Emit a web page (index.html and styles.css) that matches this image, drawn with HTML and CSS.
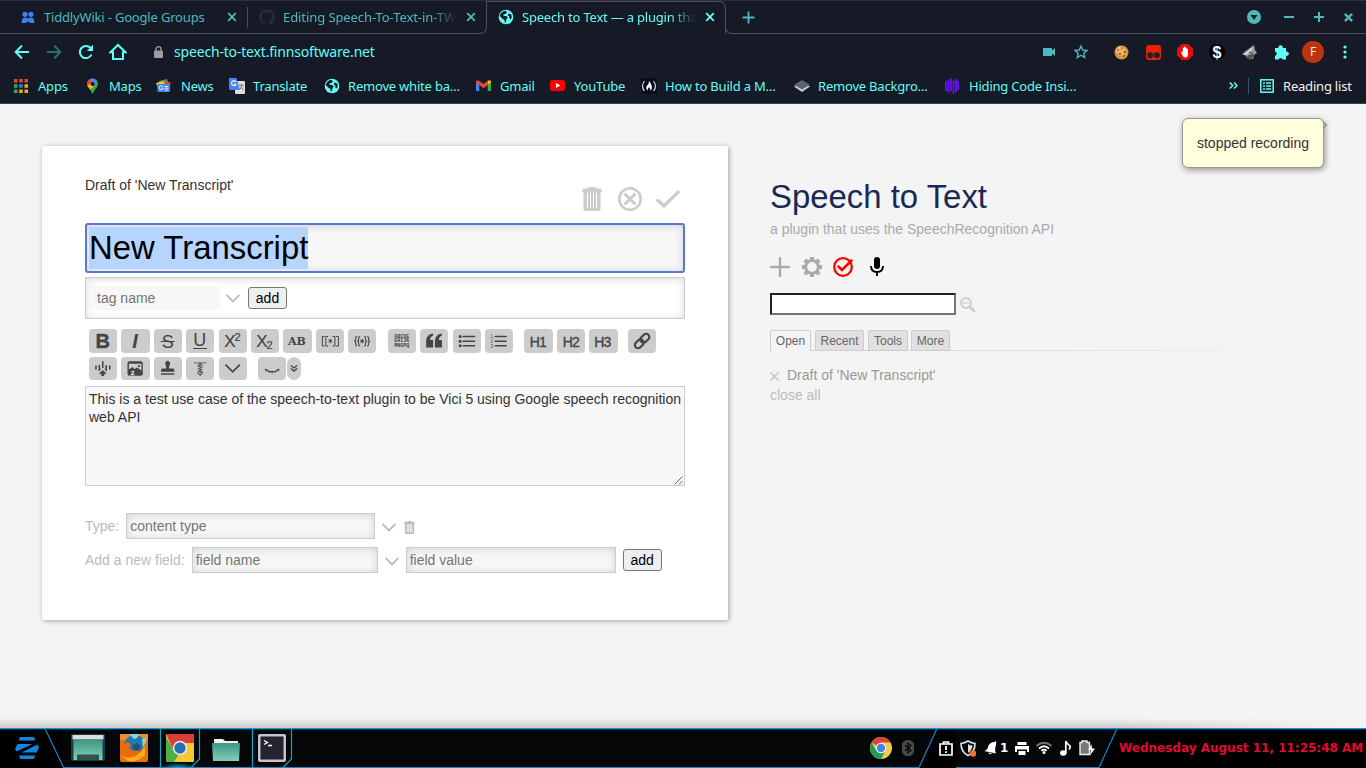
FILE: index.html
```html
<!DOCTYPE html>
<html lang="en">
<head>
<meta charset="utf-8">
<title>Speech to Text — a plugin that uses the SpeechRecognition API</title>
<link rel="stylesheet" href="styles.css">
</head>
<body>
<svg width="0" height="0" class="defs">
  <defs>
    <symbol id="globe" viewBox="0 0 16 16"><circle cx="8" cy="8" r="7.3" fill="#62fdf5"/><path d="M7.5 1.8 9 3.5 7.4 5 5.6 5.3 5.4 6.8 8.7 7.2 9.8 8.6 8.6 9.8 8 12.8 6.8 14 6.5 11 4.5 9.8 1.5 6.7 3.2 4 5 2.6zM10.5 4.4 13.3 5.6 13.8 8.5 12.4 10.6 11.2 9 11.3 7.2 9.8 6.4z" fill="#161a26"/></symbol>
    <symbol id="x" viewBox="0 0 10 10"><path d="M1.2 1.2 8.8 8.8M8.8 1.2 1.2 8.8" stroke="currentColor" stroke-width="1.8"/></symbol>
    <symbol id="down" viewBox="0 0 14 9"><path d="M1 1.3 7 7.4 13 1.3" fill="none" stroke="currentColor" stroke-width="1.8" stroke-linecap="round"/></symbol>
    <symbol id="trash" viewBox="0 0 20 24"><path d="M7 0H13L14 1.5H18.5L20 3V4.8H0V3L1.5 1.5H6zM1.5 4.5H18.500V22.500L17 24H3L1.500 22.500zM5 6V21H6V6zM8 6V21H9V6zM11 6V21H12V6zM14 6V21H15V6z" fill="currentColor" fill-rule="nonzero"/><path d="M5.500 5.500V20.500M8.500 5.500V20.500M11.500 5.500V20.500M14.500 5.500V20.500" stroke="#fff" stroke-width=".9"/></symbol>
  </defs>
</svg>

<header class="browser">
  <div class="tabs">
    <div class="tab tab-groups">
      <svg width="14" height="13" viewBox="0 0 14 13" fill="#3f7df0"><circle cx="4" cy="3.3" r="2.6"/><circle cx="10" cy="3.3" r="2.6"/><path d="M.5 12 1 8.500Q1.500 6.500 4 6.500T7 7.500Q8 6.500 10 6.500T13 8.500L13.500 12H9.500L7 10.500 4.500 12z"/></svg>
      <span class="tab-title">TiddlyWiki - Google Groups</span>
      <svg class="close" width="10" height="10"><use href="#x"/></svg>
    </div>
    <div class="tab tab-edit">
      <svg width="16" height="16" viewBox="0 0 16 16"><path fill="#242c33" fill-rule="evenodd" d="M8 0C3.6 0 0 3.6 0 8c0 3.5 2.3 6.5 5.5 7.6.4.1.5-.2.5-.4v-1.4c-2.2.5-2.7-1-2.7-1-.4-.9-.9-1.2-.9-1.2-.7-.5.1-.5.1-.5.8.1 1.2.8 1.2.8.7 1.2 1.9.9 2.3.7.1-.5.3-.9.5-1.1-1.8-.2-3.6-.9-3.6-4 0-.9.3-1.6.8-2.1-.1-.2-.4-1 .1-2.1 0 0 .7-.2 2.2.8a7.7 7.7 0 0 1 4 0c1.5-1 2.2-.8 2.2-.8.5 1.1.2 1.9.1 2.1.5.5.8 1.2.8 2.1 0 3.1-1.8 3.8-3.6 4 .3.3.6.8.6 1.5v2.2c0 .2.1.5.5.4A8 8 0 0 0 16 8c0-4.4-3.6-8-8-8z"/></svg>
      <span class="tab-title fade">Editing Speech-To-Text-in-TW</span>
      <svg class="close" width="10" height="10"><use href="#x"/></svg>
    </div>
    <div class="tab tab-active">
      <svg width="16" height="16"><use href="#globe"/></svg>
      <span class="tab-title fade">Speech to Text — a plugin tha</span>
      <svg class="close" width="10" height="10"><use href="#x"/></svg>
    </div>
    <svg class="newtab" width="13" height="13" viewBox="0 0 13 13"><path d="M6.5 .5V12.5M.5 6.5H12.5" stroke="#4fb8bd" stroke-width="1.8"/></svg>
    <div class="window-buttons">
      <svg width="14" height="14" viewBox="0 0 14 14"><circle cx="7" cy="7" r="7" fill="#4fb8bd"/><path d="M3.5 5H10.5L7 10z" fill="#161a26"/></svg>
      <svg width="10" height="10" viewBox="0 0 10 10"><path d="M0 5H10" stroke="#4fb8bd" stroke-width="2"/></svg>
      <svg width="10" height="10" viewBox="0 0 10 10"><path d="M0 5H10M5 0V10" stroke="#4fb8bd" stroke-width="2"/></svg>
      <svg width="9" height="9" viewBox="0 0 10 10"><path d="M1 1 9 9M9 1 1 9" stroke="#4fb8bd" stroke-width="2.6"/></svg>
    </div>
  </div>

  <div class="address">
    <svg class="nav-icon" width="16" height="16" viewBox="0 0 16 16"><path d="M15 8H2M8 1.5 1.7 8 8 14.5" fill="none" stroke="#62fdf5" stroke-width="2"/></svg>
    <svg class="nav-icon" width="16" height="16" viewBox="0 0 16 16"><path d="M1 8H14M8 1.5 14.3 8 8 14.5" fill="none" stroke="#2f6c73" stroke-width="2"/></svg>
    <svg class="nav-icon" width="16" height="16" viewBox="0 0 16 16"><path d="M13.5 10.6A6.1 6.1 0 1 1 12.6 4" fill="none" stroke="#62fdf5" stroke-width="2"/><path d="M15 .8V7H8.8z" fill="#62fdf5"/></svg>
    <svg class="nav-icon" width="18" height="18" viewBox="0 0 18 18"><path d="M1.5 9.2 9 2 16.500 9.200H14V16H4V9.200z" fill="none" stroke="#62fdf5" stroke-width="2"/></svg>
    <svg class="lock" width="9" height="12" viewBox="0 0 9 12"><rect y="4.500" width="9" height="7.500" rx="1" fill="#9b9da2"/><path d="M2 5V3.200A2.500 2.500 0 0 1 7 3.200V5" fill="none" stroke="#9b9da2" stroke-width="1.300"/></svg>
    <span class="url">speech-to-text.finnsoftware.net</span>
    <div class="extensions">
      <svg width="12" height="8" viewBox="0 0 12 8"><path d="M0 0H9V2.500L12 0V8L9 5.500V8H0z" fill="#4fb8bd"/></svg>
      <svg width="14" height="14" viewBox="0 0 14 14"><path d="M7 1 8.700 5 13 5.400 9.800 8.200 10.700 12.500 7 10.200 3.300 12.500 4.200 8.200 1 5.400 5.300 5z" fill="none" stroke="#4fb8bd" stroke-width="1.400"/></svg>
      <svg class="cookie" width="15" height="15" viewBox="0 0 15 15"><circle cx="7.500" cy="7.500" r="7" fill="#d8953c"/><circle cx="6.500" cy="6" r="5" fill="#edb565"/><g fill="#70400f"><circle cx="4" cy="5" r=".8"/><circle cx="8" cy="3" r=".8"/><circle cx="10.500" cy="7" r=".9"/><circle cx="6" cy="9" r=".9"/><circle cx="10" cy="11" r=".8"/><circle cx="3" cy="9.500" r=".6"/></g></svg>
      <svg width="15" height="15" viewBox="0 0 15 15"><rect width="15" height="15" rx="3" fill="#e62200"/><circle cx="4.200" cy="10.300" r="3" fill="#222"/><circle cx="10.800" cy="10.300" r="3" fill="#222"/></svg>
      <svg width="16" height="16" viewBox="0 0 16 16"><path d="M4.700 0H11.300L16 4.700V11.300L11.300 16H4.700L0 11.300V4.700z" fill="#e40d12"/><path d="M4 8 5 7.500 5.800 9V4Q6.400 3 7 4V2.800Q7.700 2 8.300 2.800V4Q9 3 9.600 4V5Q10.300 4.300 11 5V10Q11 13.500 8.300 13.500Q6 13 5 10.500z" fill="#fff"/></svg>
      <svg width="16" height="16" viewBox="0 0 16 16"><circle cx="8" cy="8" r="8" fill="#000"/><text x="8" y="13.700" text-anchor="middle" class="dollar">$</text></svg>
      <svg width="15" height="15" viewBox="0 0 15 15"><path d="M0 9 5 5 12 0 13 5 15 8 12 10 11 14 5 13 3 10z" fill="#999"/><path d="M5 11 11 8 12 11 8 15 5 13z" fill="#555"/><path d="M1 10 6 6 11 2 9 7 4 10z" fill="#ddd"/><path d="M6 8 10 6 9 8z" fill="#333"/></svg>
      <svg width="15" height="15" viewBox="0 0 15 15"><path d="M1 3H4.500A2.200 2.200 0 1 1 8.700 3H12V6.600A2.200 2.200 0 1 1 12 10.800V14.500H8.700A2.200 2.200 0 0 0 4.500 14.500H1V10.800A2.200 2.200 0 0 0 1 6.500z" fill="#62fdf5"/></svg>
      <span class="avatar">F</span>
      <svg width="4" height="14" viewBox="0 0 4 14" fill="#62fdf5"><circle cx="2" cy="2" r="1.600"/><circle cx="2" cy="7" r="1.600"/><circle cx="2" cy="12" r="1.600"/></svg>
    </div>
  </div>

  <div class="bookmarks">
    <div class="bm"><svg width="14" height="14" viewBox="0 0 14 14"><path d="M0 0H3.500V3.500H0zM5.200 0H8.700V3.500H5.200zM10.500 0H14V3.500H10.500z" fill="#ea4335"/><path d="M0 5.200H3.500V8.700H0zM0 10.500H3.500V14H0z" fill="#34a853"/><path d="M5.200 5.200H8.700V8.700H5.200z" fill="#1a82f7"/><path d="M10.500 5.200H14V8.700H10.500zM5.200 10.500H8.700V14H5.200zM10.500 10.500H14V14H10.500z" fill="#fbab09"/></svg><span>Apps</span></div>
    <div class="bm"><svg width="13" height="16" viewBox="0 0 13 16"><path d="M1 6A5.500 5.500 0 0 1 12 6C12 9 9 10.500 7 15.500H6C5 11 1 9.500 1 6z" fill="#34a853"/><path d="M1 7A5.500 5.500 0 0 1 6 .5L8.500 3 3 9.500Q1 8 1 7z" fill="#ea4335"/><path d="M4 1.200A5.500 5.500 0 0 1 11 3L7 7z" fill="#4285f4"/><path d="M1.500 8 5 5 8 8 4.500 11.500z" fill="#fbbc04"/><circle cx="6.500" cy="6" r="2" fill="#161a26"/></svg><span>Maps</span></div>
    <div class="bm"><svg width="15" height="14" viewBox="0 0 15 14"><path d="M3 2 11 0 13 6H3z" fill="#2da44e"/><path d="M9 2 15 3.500 13 9H7z" fill="#e23b31"/><path d="M0 4 8 2 9 9H2z" fill="#fbc02d"/><rect x="1.500" y="5" width="12.500" height="8" rx="1" fill="#4888ed"/><path d="M8.500 7.500H12M8.500 9.200H12.500M8.500 11H12" stroke="#fff" stroke-width=".8"/><path d="M6.800 7.700A2 2 0 1 0 7 9.200H5.500" fill="none" stroke="#fff" stroke-width=".9"/></svg><span>News</span></div>
    <div class="bm"><svg width="16" height="16" viewBox="0 0 16 16"><rect x="6" y="3" width="10" height="13" rx="1" fill="#ddd"/><path d="M0 0H7.500L11 12H1Q0 12 0 11z" fill="#4484ef"/><path d="M7 4A2.400 2.400 0 1 0 7.100 6.300H5" fill="none" stroke="#fff" stroke-width="1.100"/><path d="M10 7H14.500M12.200 6V7M13.500 7.500Q12.500 10 10.500 11.500M11.500 8.500 14.500 12" stroke="#777" fill="none"/></svg><span>Translate</span></div>
    <div class="bm"><svg width="16" height="16"><use href="#globe"/></svg><span>Remove white ba…</span></div>
    <div class="bm"><svg width="15" height="12" viewBox="0 0 15 12"><path d="M0 1.500V11H3.300V4z" fill="#4285f4"/><path d="M15 1.500V11H11.700V4z" fill="#34a853"/><path d="M0 2.500V1Q1.500-.5 3 .7L7.500 4 11.700 .8V5L7.500 8.300z" fill="#ea4335"/><path d="M11.700 5V.8Q13.500-.5 15 1V2.600z" fill="#fbbc04"/></svg><span>Gmail</span></div>
    <div class="bm"><svg width="15" height="11" viewBox="0 0 14 11" preserveAspectRatio="none"><rect width="14" height="11" rx="2.500" fill="#f00"/><path d="M5.500 3 9.700 5.500 5.500 8z" fill="#fff"/></svg><span>YouTube</span></div>
    <div class="bm"><svg width="16" height="16" viewBox="0 0 16 16"><rect width="16" height="16" fill="#0a0a23"/><path d="M3.500 3Q-.5 8 3.500 13M12.500 3Q16.500 8 12.500 13" fill="none" stroke="#ddd" stroke-width="1.200"/><path d="M8 3Q11 6.500 11 9.500 10.500 12 9.500 12.500 9.500 10.500 8 9 6.500 10.500 6.800 12.500 5 11 5.200 9 6 7 7.500 6z" fill="#fff"/></svg><span>How to Build a M…</span></div>
    <div class="bm"><svg width="16" height="12" viewBox="0 0 16 12"><path d="M8 2.200 16 6.500 8 12 0 6.500z" fill="#c8cccf"/><path d="M8 0 16 4.700 8 9.500 0 4.700z" fill="#59666f"/></svg><span>Remove Backgro…</span></div>
    <div class="bm"><svg width="14" height="16" viewBox="0 0 14 16"><path d="M1 3V13M3.500 1.500V14.500M6 .5V13M8.500 2.500V16M11 1V14M13 3V12.500" stroke="#6610e8" stroke-width="1.900"/></svg><span>Hiding Code Insi…</span></div>
    <div class="reading">
      <svg width="9" height="7" viewBox="0 0 9 7"><path d="M.7 .5 3.700 3.500 .7 6.500M5 .5 8 3.500 5 6.500" fill="none" stroke="#62fdf5" stroke-width="1.500"/></svg>
      <i></i>
      <svg width="14" height="14" viewBox="0 0 14 14"><rect x=".8" y=".8" width="12.400" height="12.400" fill="none" stroke="#62fdf5" stroke-width="1.500"/><path d="M3 4H5M3 7H5M3 10H5M6 4H11M6 7H11M6 10H11" stroke="#62fdf5" stroke-width="1.500"/></svg>
      <span>Reading list</span>
    </div>
  </div>
</header>

<main class="page">
  <section class="tiddler">
    <div class="titlebar">
      <span>Draft of 'New Transcript'</span>
      <div class="controls">
        <svg width="20" height="24"><use href="#trash"/></svg>
        <svg width="24" height="24" viewBox="0 0 24 24"><circle cx="12" cy="12" r="10.700" fill="none" stroke="#ccc" stroke-width="2.600"/><path d="M7.500 7.500 16.500 16.500M16.500 7.500 7.500 16.500" stroke="#ccc" stroke-width="3" stroke-linecap="round"/></svg>
        <svg width="24" height="18" viewBox="0 0 24 18"><path d="M1.700 10.500 8 16 22.300 2" fill="none" stroke="#ccc" stroke-width="3.200" stroke-linecap="round"/></svg>
      </div>
    </div>
    <div class="title-input"><span>New Transcript</span></div>
    <div class="tags">
      <span class="tag-input">tag name</span>
      <svg width="14" height="9"><use href="#down"/></svg>
      <button>add</button>
    </div>
    <div class="toolbar">
      <div class="row row-one">
        <div class="group">
          <b><svg viewBox="0 0 28 24"><text x="13.500" y="19" class="t-bold">B</text></svg></b>
          <b><svg viewBox="0 0 28 24"><text x="14" y="19" class="t-italic">I</text></svg></b>
          <b><svg viewBox="0 0 28 24"><text x="13.500" y="18.800" class="t-plain">S</text><path d="M6.500 12.500H20.500" stroke="#444" stroke-width="1.200"/></svg></b>
          <b><svg viewBox="0 0 28 24"><text x="13.500" y="16.800" class="t-plain">U</text><path d="M7 19.500H21" stroke="#444" stroke-width="1.100"/></svg></b>
          <b><svg viewBox="0 0 28 24"><text x="10.700" y="18" class="t-x">X</text><text x="18.500" y="11.500" class="t-sup">2</text></svg></b>
          <b><svg viewBox="0 0 28 24"><text x="10.700" y="17.500" class="t-x">X</text><text x="18.500" y="20" class="t-sup">2</text></svg></b>
          <b><svg viewBox="0 0 28 24"><text x="13.800" y="16" class="t-slab">AB</text></svg></b>
          <b><svg viewBox="0 0 28 24"><path d="M8.500 7.500H6.200V17H8.500M12 7.500H9.700V17H12M16.500 7.500H18.800V17H16.500M20 7.500H22.300V17H20" fill="none" stroke="#444"/><path d="M14.200 9.800V14.200M12.300 10.800 16.100 13.200M16.100 10.800 12.300 13.200" stroke="#444" stroke-width=".9"/></svg></b>
          <b><svg viewBox="0 0 28 24"><path d="M9 7.500Q7.300 7.500 7.500 10T6 12.200Q7.600 12.200 7.500 14.500T9 17M12 7.500Q10.300 7.500 10.500 10T9 12.200Q10.600 12.200 10.500 14.500T12 17M16 7.500Q17.700 7.500 17.500 10T19 12.200Q17.400 12.200 17.500 14.500T16 17M19 7.500Q20.700 7.500 20.500 10T22 12.200Q20.400 12.200 20.500 14.500T19 17" fill="none" stroke="#444" stroke-width="1.100"/><path d="M14 10V14.400M12.100 11 15.900 13.400M15.900 11 12.100 13.400" stroke="#444"/></svg></b>
        </div>
        <div class="group">
          <b><svg viewBox="0 0 28 24"><text x="13.500" y="9" class="t-tiny">ABCDE</text><text x="13.500" y="13.400" class="t-tiny">GHIJK</text><text x="13.500" y="17.800" class="t-tiny">MNOPQ</text></svg></b>
          <b><svg viewBox="0 0 28 24"><path d="M13 4.500V6.500Q10 7.500 9.900 11H13V18.500H6V12Q6 5.500 13 4.500zM21.800 4.500V6.500Q18.800 7.500 18.700 11H21.800V18.500H14.800V12Q14.800 5.500 21.800 4.500z" fill="#444"/></svg></b>
          <b><svg viewBox="0 0 28 24"><path d="M10 7.500H21.500M10 12.200H21.500M10 16.700H21.500" stroke="#444" stroke-width="1.500" stroke-linecap="round"/><g fill="#444"><circle cx="7" cy="7.500" r="1.500"/><circle cx="7" cy="12.200" r="1.500"/><circle cx="7" cy="16.700" r="1.500"/></g></svg></b>
          <b><svg viewBox="0 0 28 24"><path d="M10 7.500H21M10 12.200H21M10 16.700H21" stroke="#444" stroke-width="1.500" stroke-linecap="round"/><text x="6.500" y="9" class="t-num">1</text><text x="6.500" y="13.800" class="t-num">2</text><text x="6.500" y="18.600" class="t-num">3</text></svg></b>
        </div>
        <div class="group">
          <b><svg viewBox="0 0 28 24"><text x="13.700" y="17.500" class="t-head">H1</text></svg></b>
          <b><svg viewBox="0 0 28 24"><text x="13.700" y="17.500" class="t-head">H2</text></svg></b>
          <b><svg viewBox="0 0 28 24"><text x="13.300" y="17.500" class="t-head">H3</text></svg></b>
        </div>
        <div class="group last">
          <b><svg viewBox="0 0 28 24"><g fill="none" stroke="#444" stroke-width="2.100" transform="rotate(-45 14 12)"><rect x="5" y="8.800" width="10" height="6.400" rx="3.200"/><rect x="12.800" y="8.800" width="10" height="6.400" rx="3.200"/></g></svg></b>
        </div>
      </div>
      <div class="row row-two">
        <div class="group">
          <b><svg viewBox="0 0 28 24"><path d="M6.500 9.500V12.500M10 9V14M13.600 5V11M17.200 9V14M20.800 9.500V12.500" stroke="#444" stroke-width="1.600" stroke-linecap="round"/><path d="M10 14 11.500 12M17.200 14 15.700 12M13.600 14 17 17.200H14.800V19.500H12.400V17.200H10.200z" stroke="#444" stroke-width=".7" fill="#444"/></svg></b>
          <b><svg viewBox="0 0 28 24"><path d="M8 4.500H20Q22 4.500 22 6.500V17.500Q22 19.500 20 19.500H8Q6 19.500 6 17.500V6.500Q6 4.500 8 4.500zM7.500 7V13L11 10.500 13.500 12.500 16 11 20.500 14V7zM17 8.500H19V10.500H17z" fill="#444" fill-rule="evenodd"/><path d="M10 15.500Q12.500 14 12.500 16L10 18.500H13.500" fill="none" stroke="#ddd" stroke-width="1.200"/></svg></b>
          <b><svg viewBox="0 0 28 24"><path d="M13.500 4A2.800 2.800 0 0 1 15.500 8.500Q14.500 11 15 12H19Q20.500 12 20.500 14V15.500H6.500V14Q6.500 12 8 12H12Q12.500 11 11.500 8.500A2.800 2.800 0 0 1 13.500 4zM6.500 17H20.500V18.500H6.500z" fill="#444"/></svg></b>
          <b><svg viewBox="0 0 28 24"><path d="M7.500 6H20.500" stroke="#888" stroke-width="1.500"/><path d="M14 8V17M11.500 9.500 16.500 10.500M11.500 12 16.500 13M11.500 14.500 16.500 15.500M11 16 14 19 17 16M11.500 9 14 6.500 16.500 9" fill="none" stroke="#555" stroke-width="1.200"/></svg></b>
          <b><svg viewBox="0 0 28 24"><path d="M6.500 8.500 13.500 15.500 20.500 8.500" fill="none" stroke="#444" stroke-width="1.800" stroke-linecap="round"/></svg></b>
        </div>
        <div class="preview">
          <b><svg viewBox="0 0 28 24"><path d="M6.500 12.500Q14 18.500 21.500 12.500" fill="none" stroke="#444" stroke-width="1.500"/><path d="M8 13.500 7.300 15M11 15 10.700 16.500M14 15.500V17M17 15 17.300 16.500M20 13.500 20.700 15" fill="none" stroke="#444" stroke-width=".9"/></svg></b>
          <b class="pill"><svg viewBox="0 0 14 24"><path d="M3.800 8.800 7 11.500 10.200 8.800M3.800 12 7 14.700 10.200 12" fill="none" stroke="#444" stroke-width="1.300"/></svg></b>
        </div>
      </div>
    </div>
    <div class="text-area">This is a test use case of the speech-to-text plugin to be Vici 5 using Google speech recognition web API
      <svg class="grip" width="9" height="9" viewBox="0 0 9 9"><path d="M.5 8.500 8.500 .5M5 8.500 8.500 5" stroke="#555" stroke-width=".9"/></svg>
    </div>
    <div class="field-row type-row">
      <label>Type:</label><span class="field type">content type</span>
      <svg width="14" height="9"><use href="#down"/></svg>
      <svg class="small-trash" width="11" height="13"><use href="#trash"/></svg>
    </div>
    <div class="field-row">
      <label>Add a new field:</label><span class="field name">field name</span>
      <svg width="14" height="9"><use href="#down"/></svg>
      <span class="field value">field value</span><button>add</button>
    </div>
  </section>

  <aside class="sidebar">
    <h1>Speech to Text</h1>
    <p class="subtitle">a plugin that uses the SpeechRecognition API</p>
    <div class="page-controls">
      <svg width="20" height="20" viewBox="0 0 20 20"><path d="M10 1V19M1 10H19" stroke="#aaa" stroke-width="2.400" stroke-linecap="round"/></svg>
      <svg width="20" height="20" viewBox="0 0 20 20"><circle cx="10" cy="10" r="6.400" fill="none" stroke="#aaa" stroke-width="3"/><path d="M10 0V3M10 17V20M0 10H3M17 10H20M2.900 2.900 5 5M15 15 17.100 17.100M17.100 2.900 15 5M5 15 2.900 17.100" stroke="#aaa" stroke-width="4"/></svg>
      <svg width="20" height="20" viewBox="0 0 20 20"><circle cx="10" cy="10" r="8.800" fill="none" stroke="red" stroke-width="2.300"/><path d="M5.500 9.500 9 13 18.500 3.500" fill="none" stroke="red" stroke-width="2.500" stroke-linecap="round"/></svg>
      <svg width="14" height="20" viewBox="0 0 14 20"><rect x="4" y="0" width="6" height="12" rx="3"/><path d="M1 9Q1 15 7 15T13 9M7 15V19" fill="none" stroke="#000" stroke-width="1.900"/></svg>
    </div>
    <div class="search"><input type="text"><svg width="16" height="16" viewBox="0 0 16 16"><circle cx="6" cy="6" r="4.900" fill="none" stroke="#ccc" stroke-width="2"/><path d="M9.700 9.700 14 14" stroke="#ccc" stroke-width="2.600" stroke-linecap="round"/><path d="M3 6H9" stroke="#ccc" stroke-width="1.600" stroke-dasharray="1.500 .7"/></svg></div>
    <div class="side-tabs"><span class="on">Open</span><span>Recent</span><span>Tools</span><span>More</span></div>
    <div class="open-item"><svg width="9" height="9" viewBox="0 0 9 9"><path d="M.7 .7 8.300 8.300M8.300 .7 .7 8.300" stroke="#bbb" stroke-width="1.200" stroke-linecap="round"/></svg><span>Draft of 'New Transcript'</span></div>
    <div class="close-all">close all</div>
  </aside>
  <svg class="chevron" width="6" height="8" viewBox="0 0 6 8"><path d="M1 .7 4.500 4 1 7.300" fill="none" stroke="#aaa" stroke-width="1.500"/></svg>
  <div class="notification">stopped recording</div>
</main>

<footer class="taskbar">
  <svg class="bar-lines" width="1366" height="40" viewBox="0 0 1366 40"><path d="M63 1H1366V40H63z" fill="#060708"/><path d="M0 1H45L63 40H0zM937 1H956V40H919zM1117 1H1366V40H1099z" fill="#000"/><path d="M0 .5H1366" stroke="#0b9ae6" stroke-width="1.300"/><g fill="none" stroke="#1287c8" stroke-width="1.200"><path d="M45 .5 63.500 39.500H919L937 .5M956 39.500H1099L1117 .5"/><path d="M160.500 39V.5H199.500V31L191 39.500M252.500 39V.5H291.500V31L283 39.500" stroke="#12a5cc"/></g></svg>
  <div class="launchers">
    <svg width="24" height="22" viewBox="0 0 24 22" fill="#0f86e0"><path d="M5 0H19L20.300 3.500H3.700zM3.700 18.500H20.300L18.500 22H5.500zM2.500 7H17.500L1.500 14.500 0 12zM22.500 7.500 24 10.500 21.500 15.500H6.500z"/></svg>
    <svg width="34" height="30" viewBox="0 0 34 30"><defs><linearGradient id="teal" x2="0" y2="1"><stop stop-color="#3f9683"/><stop offset="1" stop-color="#7fd0bb"/></linearGradient></defs><rect x="0" y="1" width="34" height="27" rx="1" fill="#153f4c"/><rect x="1.500" y="2" width="31" height="4.500" fill="#ddd"/><rect x="2.500" y="6.500" width="29" height="20.500" fill="url(#teal)"/><rect x="6" y="21.500" width="22" height="5.500" fill="#31544d"/></svg>
    <svg width="28" height="28" viewBox="0 0 28 28"><rect width="28" height="28" rx="2" fill="#e1760d"/><path d="M0 0H28V6H0z" fill="#e8912c"/><circle cx="15" cy="12" r="11" fill="#2379ac"/><path d="M9 0H20L17 4 14 5zM22 5 26 4V13L23 15z" fill="#8bd2e4"/><path d="M0 6 4 10 8 8 11 11 9 14 13 17 18 15 20 18 26 8 26 21 18 28H6L0 22z" fill="#e96c0c"/><path d="M0 21Q6 25 13 23T25 12L25 21Q17 29 8 27z" fill="#ffad18"/><path d="M12 12 17 9 21 12 18 17 14 16z" fill="#244e88"/></svg>
    <svg width="28" height="28" viewBox="0 0 28 28"><rect width="28" height="28" rx="1" fill="#f5c735"/><path d="M0 0H28V9H14L8 17z" fill="#d93d35"/><path d="M0 3 9 18 13 20 8 28H0z" fill="#4fae49"/><circle cx="14" cy="14" r="7.200" fill="#eee"/><circle cx="14" cy="14" r="5.700" fill="#286fb5"/></svg>
    <svg width="30" height="24" viewBox="0 0 30 24"><path d="M3 5V1H12L14 3H27V6H3z" fill="#f2f2f2"/><path d="M1 5H29L28 23H2z" fill="url(#teal)"/></svg>
    <svg width="28" height="28" viewBox="0 0 28 28"><rect width="28" height="28" rx="2" fill="#c3c3c8"/><rect x="2.500" y="2.500" width="23" height="23" fill="#252330"/><path d="M6 6.500 9.500 8.500 6 10.500M10 11.500H14" fill="none" stroke="#fff" stroke-width="1.300"/></svg>
  </div>
  <div class="chrome-glow"></div>
  <div class="tray">
    <svg width="22" height="22" viewBox="0 0 22 22"><circle cx="11" cy="11" r="11" fill="#f5cb45"/><path d="M11 11 1.500 5.500A11 11 0 0 1 20.500 5.500H11z" fill="#da4436"/><path d="M1.500 5.500A11 11 0 0 0 11 22L15.500 13.500 11 11 6.300 13.500z" fill="#1b9e5a"/><circle cx="11" cy="11" r="5.300" fill="#fff"/><circle cx="11" cy="11" r="4.200" fill="#4382ed"/></svg>
    <svg width="12" height="16" viewBox="0 0 12 16"><rect width="12" height="16" rx="5.500" fill="#4a4a4a"/><path d="M3 5 9 10.500 6 13V3L9 5.500 3 11" fill="none" stroke="#050505" stroke-width="1.200"/></svg>
    <svg width="14" height="15" viewBox="0 0 14 15"><path d="M1 3H13V14H1zM4.500 3V1H9.500V3" fill="none" stroke="#fff" stroke-width="1.700"/><path d="M7 5V9M7 10.300V12" stroke="#fff" stroke-width="1.800"/></svg>
    <svg width="17" height="17" viewBox="0 0 17 17"><path d="M8 1Q11 3 15 3.500 15 12 8 15.500 1 12 1 3.500 5 3 8 1z" fill="none" stroke="#ddd" stroke-width="1.700"/><path d="M8 4Q10 5.500 12.500 5.500 12 10 8 13z" fill="#ddd"/><circle cx="13" cy="13.500" r="3.200" fill="#ee7332"/></svg>
    <svg width="14" height="14" viewBox="0 0 14 14"><path d="M12 0 10.500 1Q5.500 1 4 6 3.500 9 0 10L12 12.500Q10.500 9 11.500 6 12.500 3 12 0zM4 11.500 8 12.500Q6 14.500 4 11.500z" fill="#fff"/></svg>
    <span class="count">1</span>
    <svg width="14" height="13" viewBox="0 0 14 13"><path d="M2.500 0H11.500V3H2.500zM0 4H14V10H12V7.500H2V10H0zM3.500 9H10.500V13H3.500z" fill="#fff"/></svg>
    <svg width="16" height="12" viewBox="0 0 16 12"><path d="M.5 4Q8-2.500 15.500 4" fill="none" stroke="#777" stroke-width="1.800"/><path d="M3 6.500Q8 2 13 6.500M5.300 8.800Q8 6.500 10.700 8.800" fill="none" stroke="#fff" stroke-width="1.800"/><circle cx="8" cy="10.500" r="1.500" fill="#fff"/></svg>
    <svg width="11" height="16" viewBox="0 0 11 16"><ellipse cx="3.300" cy="13" rx="3.300" ry="2.800" fill="#fff"/><path d="M5.800 13V1Q7 4 9.500 5.500 11 7 9 9.500" fill="none" stroke="#fff" stroke-width="1.700"/></svg>
    <svg width="16" height="16" viewBox="0 0 16 16"><path d="M1 2.500H3V1H8V2.500H10.500V14.500H1z" fill="#777" stroke="#eee" stroke-width="1.400"/><path d="M12.500 4 9.500 10H12L11 15.500 16 8.500H13z" fill="#fff"/></svg>
  </div>
  <div class="clock">Wednesday August 11, 11:25:48 AM</div>
</footer>
</body>
</html>
```
FILE: styles.css
```css
* { box-sizing: border-box; }
body { margin: 0; width: 1366px; height: 768px; overflow: hidden; display: flex; flex-direction: column; background: #f4f4f4; font: 14px/20px "Liberation Sans", Arial, sans-serif; color: #333; }
svg { display: block; flex: none; }
.defs { position: absolute; }

.browser { height: 104px; background: #161a26; border-top: 1px solid #2d303b; border-bottom: 1px solid #27505c; font-family: "Noto Sans", sans-serif; color: #62fdf5; font-size: 13px; }
.tabs { height: 33px; display: flex; color: #4fb8bd; position: relative; }
.tab { display: flex; align-items: center; border-bottom: 1px solid #4b4f5a; white-space: nowrap; }
.tab-title { overflow: hidden; flex: none; }
.tab .close { margin-left: auto; color: #4fb8bd; }
.tab-groups { width: 248px; padding: 0 11px 0 21px; background: linear-gradient(#2d5a65, #2d5a65) right 6px / 1px 21px no-repeat; }
.tab-groups .tab-title { margin-left: 9px; letter-spacing: -.18px; }
.tab-edit { width: 239px; padding: 0 10px 0 11px; border-right: 1px solid #4b4f5a; border-bottom-right-radius: 7px; }
.tab-edit .tab-title { margin-left: 8px; width: 174px; letter-spacing: -.08px; }
.tab-active { width: 239px; padding: 0 10px 2px 11px; border-bottom: 0; border-top: 1px solid #4b4f5a; border-right: 1px solid #4b4f5a; border-radius: 0 7px 0 0; color: #62fdf5; }
.tab-active .tab-title { margin-left: 8px; width: 174px; letter-spacing: -.2px; }
.tab-active .close { color: #62fdf5; }
.fade { -webkit-mask-image: linear-gradient(90deg, #000 85%, transparent); mask-image: linear-gradient(90deg, #000 85%, transparent); }
.tabs::after { content: ""; position: absolute; left: 725px; right: 0; bottom: 0; height: 10px; border-bottom: 1px solid #4b4f5a; border-left: 1px solid #4b4f5a; border-bottom-left-radius: 7px; }
.newtab { margin: 10px 0 0 16px; }
.window-buttons { margin: 0 13px 0 auto; display: flex; align-items: center; gap: 20px; height: 32px; }
.window-buttons svg:first-child { margin-right: 3px; }

.address { height: 36px; display: flex; align-items: center; padding-left: 14px; }
.nav-icon { margin-right: 16px; }
.nav-icon + .nav-icon + .nav-icon + .nav-icon { margin: 0 27px 0 -1px; }
.lock { margin-right: 11px; }
.url { font-size: 14px; letter-spacing: -.18px; white-space: nowrap; }
.extensions { margin-left: auto; padding-right: 5px; display: grid; grid-template-columns: 32px 32px 40px repeat(7, 32px); align-items: center; justify-items: center; }
.cookie { margin-left: 8px; }
.avatar { width: 22px; height: 22px; border-radius: 50%; background: #be330d; color: #eee; text-align: center; font-size: 12px; line-height: 22px; }
.dollar { font: bold 16px "Liberation Sans", sans-serif; fill: #fff; }

.bookmarks { height: 32px; display: grid; grid-template-columns: 72px 70px 73px 95px 152px 74px 91px 153px 151px 284px 1fr; align-items: center; padding-left: 14px; padding-bottom: 1px; }
.bm { display: grid; grid-template-columns: 24px auto; justify-content: start; align-items: center; white-space: nowrap; letter-spacing: -.2px; }
.bm:nth-child(2) { grid-template-columns: 23px auto; }
.bm:nth-child(3) { grid-template-columns: 25px auto; }
.reading { display: flex; align-items: center; color: #f1f3f4; white-space: nowrap; letter-spacing: -.2px; }
.reading i { width: 1px; height: 16px; background: #2d5a65; margin: 0 11px 0 10px; }
.reading span { margin-left: 9px; }

.page { height: 624px; position: relative; display: flex; padding: 42px; background: linear-gradient(90deg, transparent 1130px, #f4f4f4 1340px) 0 100% / 100% 12px no-repeat, linear-gradient(transparent, rgba(0,0,0,.17)) 0 100% / 100% 10px no-repeat, #f4f4f4; }
.tiddler { width: 686px; height: 474px; padding: 29px 43px 0; background: #fff; border-radius: 2px; box-shadow: 1px 1px 5px rgba(0,0,0,.35); }
.titlebar { height: 48px; display: flex; justify-content: space-between; }
.controls { display: flex; align-items: center; gap: 14px; height: 48px; padding-right: 5px; color: #ccc; }
.controls svg:first-child { margin-right: 2px; }
.title-input { height: 50px; border: 2px solid #5778d8; border-radius: 3px; background: #f7f7f7; box-shadow: inset 0 1px 8px rgba(0,0,0,.15); padding: 2px; color: #000; font-size: 32.9px; line-height: 42px; }
.title-input span { display: inline-block; background: #b5d5ff; }
.tags { height: 42px; margin-top: 4px; border: 1px solid #ccc; box-shadow: inset 0 1px 8px rgba(0,0,0,.15); display: flex; align-items: center; padding-left: 4px; color: #bbb; }
.tag-input { width: 130px; height: 24px; padding-left: 7px; line-height: 24px; background: #f7f7f7; color: #757575; margin-right: 6px; }
button { width: 39px; height: 22px; padding: 0; border: 1px solid #767676; border-radius: 3px; background: #efefef; color: #000; font: 14px/18px "Liberation Sans", Arial, sans-serif; }
.tags button { margin-left: 8px; }

.toolbar { padding: 10px 0 6px 4px; }
.row, .group, .preview { display: flex; }
.row-one { height: 24px; gap: 11.300px; }
.row-two { height: 23px; gap: 11.300px; margin-top: 4px; }
.group { gap: 4.100px; }
.last { margin-left: -1px; }
.preview { gap: 1px; }
b { width: 28.300px; border-radius: 4px; background: #ccc; overflow: hidden; }
b svg { width: 100%; height: 100%; }
b.pill { width: 14px; border-radius: 7px; }
b text { font-family: "Liberation Sans", sans-serif; font-weight: normal; text-anchor: middle; fill: #444; }
b .t-bold { font-size: 20px; font-weight: bold; stroke: #444; stroke-width: .4px; }
b .t-italic { font-size: 20px; font-weight: bold; font-style: italic; }
b .t-plain { font-size: 18px; }
b .t-x { font-size: 17px; stroke: #444; stroke-width: .2px; }
b .t-sup { font-size: 11px; stroke: #444; stroke-width: .2px; }
b .t-slab { font: bold 11px "DejaVu Serif", serif; }
b .t-tiny { font: bold 5px "Liberation Mono", monospace; }
b .t-num { font-size: 4.500px; }
b .t-head { font-size: 14px; letter-spacing: -.8px; stroke: #444; stroke-width: .35px; }
.text-area { position: relative; height: 100px; border: 1px solid #ccc; background: #f7f7f7; padding: 3px; line-height: 18px; }
.grip { position: absolute; right: 1px; bottom: 0; }
.field-row { display: flex; align-items: center; height: 26px; margin-top: 8px; color: #bbb; white-space: nowrap; }
.field-row svg { margin-top: 2px; }
.type-row { margin-top: 27px; }
.field { height: 26px; border: 1px solid #ccc; background: #f7f7f7; box-shadow: inset 0 1px 8px rgba(0,0,0,.15); padding-left: 3px; line-height: 24px; color: #757575; margin: 0 7px; }
.type { width: 249px; }
.name { width: 186px; }
.value { width: 210px; }
.field-row .small-trash { margin-left: 8px; }

.sidebar { width: 554px; margin-left: 42px; padding-top: 29px; color: #aaa; }
h1 { margin: 0; height: 44px; color: #182955; font-weight: normal; font-size: 32.900px; line-height: 43px; }
.subtitle { margin: 0; }
.page-controls { display: flex; align-items: center; height: 20px; margin-top: 18px; }
.page-controls svg { margin-right: 12px; }
.page-controls svg:nth-child(2) { margin-right: 11px; }
.page-controls svg:nth-child(3) { margin-right: 17px; }
.search { display: flex; align-items: center; gap: 4px; margin-top: 16px; }
.search svg { margin-top: 2px; }
.search input { width: 186px; height: 22px; border: 2px inset #767676; background: #fff; padding: 0; }
.side-tabs { display: flex; height: 21px; margin-top: 15px; color: #666; font-size: 12px; line-height: 20px; background: linear-gradient(90deg, #ccc, #f4f4f4) bottom / 100% 1px no-repeat; }
.side-tabs span { width: 41px; border: 1px solid #ccc; border-radius: 2px 2px 0 0; background: #e0e0e0; text-align: center; margin-right: 4px; }
.side-tabs .on { background: #f4f4f4; border-bottom: 0; }
.side-tabs span:nth-child(2) { width: 49px; }
.side-tabs span:nth-child(3) { width: 40px; margin-right: 3px; }
.side-tabs span:nth-child(4) { width: 39px; }
.open-item { display: flex; align-items: center; margin-top: 14px; gap: 8px; color: #999; }
.open-item svg { margin-top: 3px; }
.close-all { color: #bbb; }
.chevron { position: absolute; left: 1322px; top: 17px; }
.notification { position: absolute; right: 42px; top: 14px; width: 142px; height: 50px; border: 1px solid #999; border-radius: 6px; background: #ffffdd; box-shadow: 1px 2px 6px rgba(0,0,0,.4); text-align: center; line-height: 49px; }

.taskbar { height: 40px; position: relative; display: flex; background: #000; }
.bar-lines { position: absolute; left: 0; top: 0; }
.launchers { position: relative; display: flex; align-items: center; height: 40px; padding-left: 15px; }
.launchers svg:nth-child(1) { margin-right: 32px; }
.launchers svg:nth-child(2) { margin-right: 15px; }
.launchers svg:nth-child(3) { margin-right: 18px; }
.launchers svg:nth-child(4) { margin-right: 17px; }
.launchers svg:nth-child(5) { margin: 3px 17px 0 0; }
.chrome-glow { position: absolute; left: 161px; bottom: 0; width: 34px; height: 5px; background: radial-gradient(ellipse at bottom, #16aac8, transparent 75%); }
.tray { position: relative; display: flex; align-items: center; margin-left: auto; width: 249px; flex: none; color: #fff; }
.tray svg { margin-right: 7px; }
.tray svg:nth-child(1) { margin-right: 10px; }
.tray svg:nth-child(2) { margin-right: 25px; }
.tray svg:nth-child(4) { margin-right: 7px; }
.tray svg:nth-child(5) { margin-right: 2px; }
.count { width: 8px; margin-right: 7px; font: bold 12px "DejaVu Sans", sans-serif; }
.tray svg:nth-child(8) { margin-right: 8px; }
.tray svg:nth-child(9) { margin-right: 8px; }
.clock { position: relative; width: 247px; flex: none; color: #e00b34; font: bold 12px/40px "DejaVu Sans", sans-serif; white-space: nowrap; }
```
